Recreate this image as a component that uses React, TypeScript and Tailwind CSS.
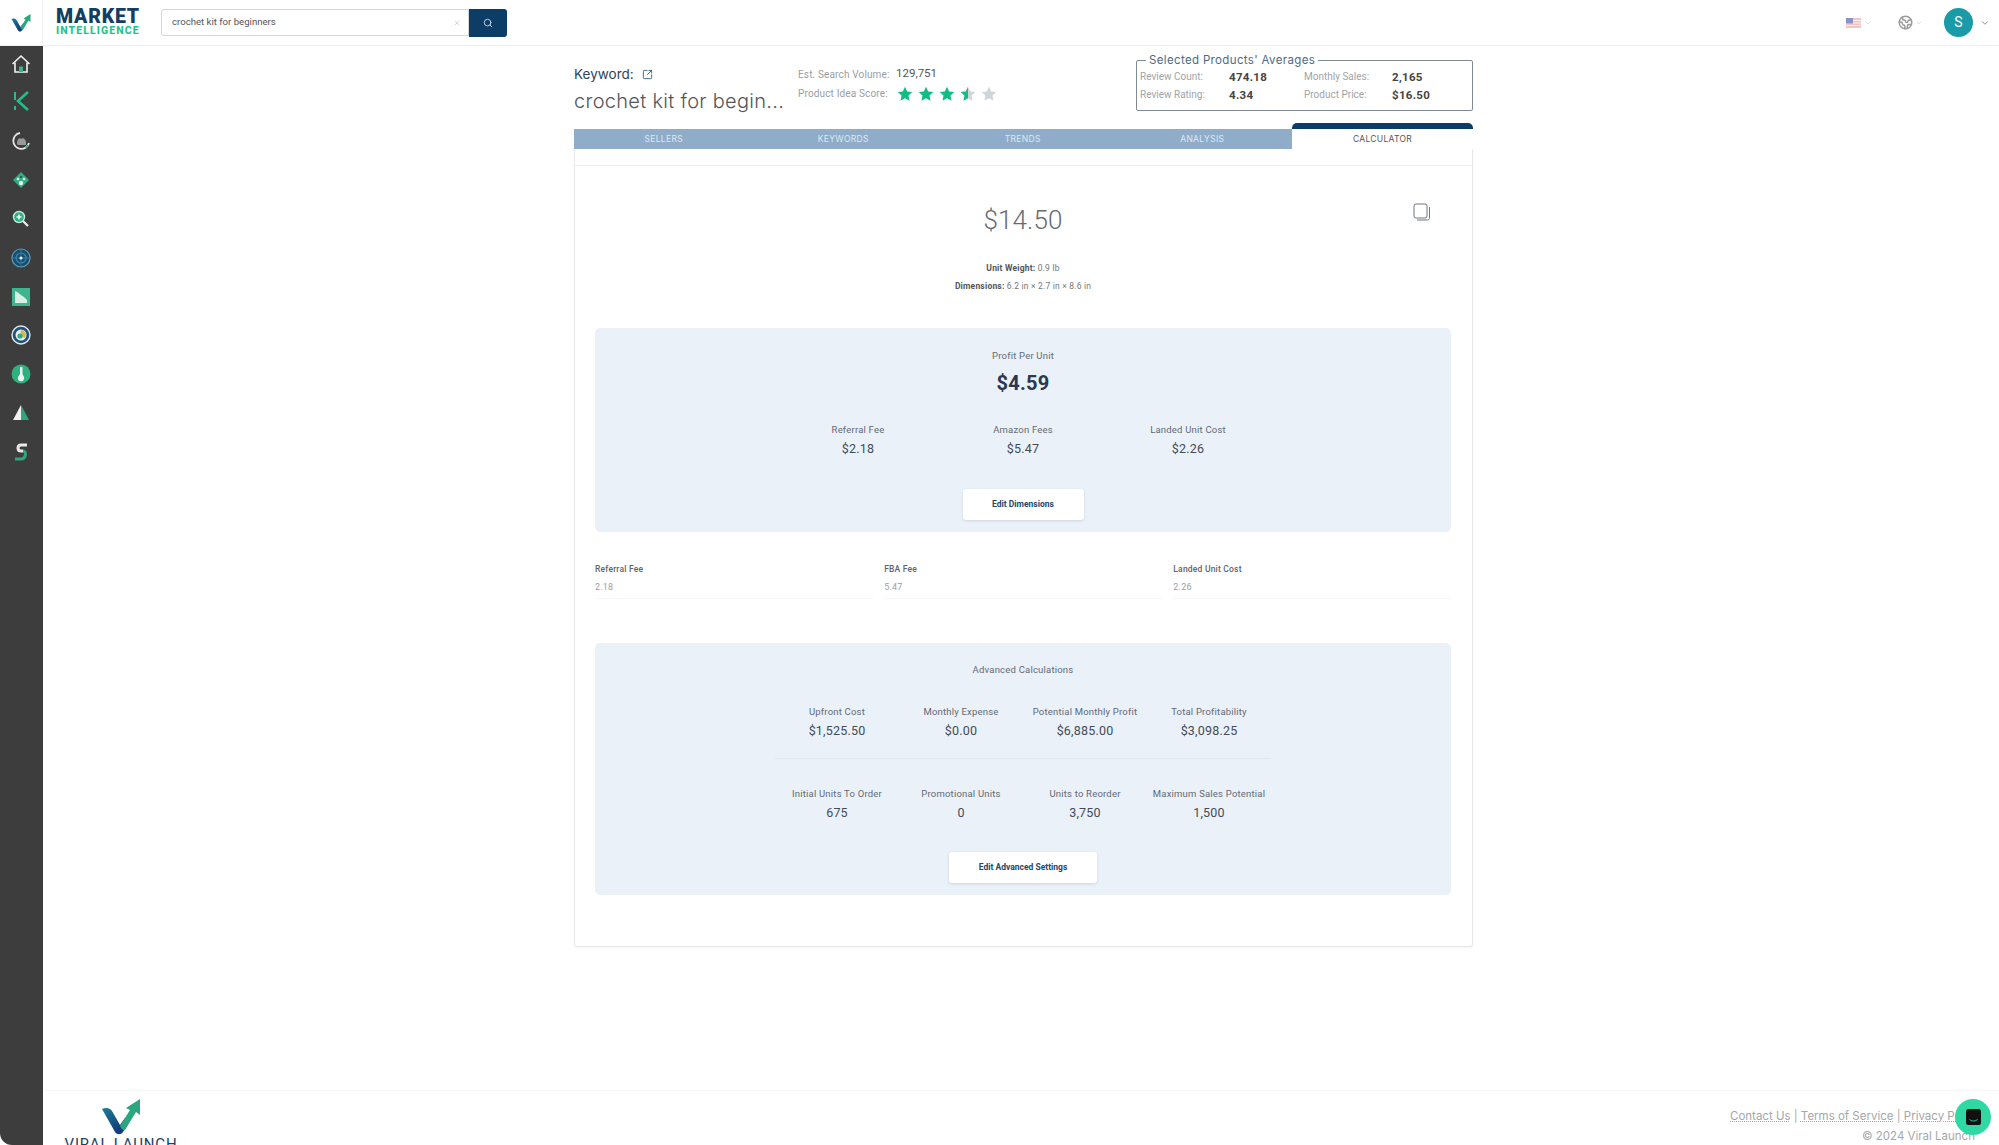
import { ChevronDown, Earth, Search, SquareArrowOutUpRight, X } from "lucide-react";

const sansLabel = "font-['Roboto',sans-serif]";
const wideFont = "font-['Inter','Open_Sans',sans-serif]";

const feeColumns = [
  { label: "Referral Fee", value: "$2.18" },
  { label: "Amazon Fees", value: "$5.47" },
  { label: "Landed Unit Cost", value: "$2.26" },
];

const feeFields = [
  { label: "Referral Fee", value: "2.18" },
  { label: "FBA Fee", value: "5.47" },
  { label: "Landed Unit Cost", value: "2.26" },
];

const advancedTop = [
  { label: "Upfront Cost", value: "$1,525.50" },
  { label: "Monthly Expense", value: "$0.00" },
  { label: "Potential Monthly Profit", value: "$6,885.00" },
  { label: "Total Profitability", value: "$3,098.25" },
];

const advancedBottom = [
  { label: "Initial Units To Order", value: "675" },
  { label: "Promotional Units", value: "0" },
  { label: "Units to Reorder", value: "3,750" },
  { label: "Maximum Sales Potential", value: "1,500" },
];

function VLogo({ size }: { size: number }) {
  return (
    <svg width={size} height={size} viewBox="0 0 40 40">
      <defs>
        <linearGradient id={`vl-${size}`} x1="0" y1="0" x2="1" y2="1">
          <stop offset="0" stopColor="#1f7f96" />
          <stop offset="0.7" stopColor="#123f7a" />
        </linearGradient>
      </defs>
      <path d="M1 12 C5 10 9 11 11 14 L19 28 L24 21 L29 24 L22 35 C20 38 16 38 14 35 Z" fill={`url(#vl-${size})`} />
      <path d="M19 29 L29 13 L25 11 L39 2 L39 18 L35 15 L24 33 C23 34 21 33 19 29 Z" fill="#2aa77f" />
    </svg>
  );
}

function Star({ fill }: { fill: "full" | "half" | "empty" }) {
  const gray = "#cfd5db";
  const green = "#12bd85";
  const d = "M8 .8l2.2 4.7 5.1.6-3.8 3.5 1 5.1L8 12.2l-4.5 2.5 1-5.1L.7 6.1l5.1-.6z";
  return (
    <svg width="16" height="16" viewBox="0 0 16 16">
      <path d={d} fill={fill === "full" ? green : gray} />
      {fill === "half" && <path d="M8 .8L5.8 5.5l-5.1.6 3.8 3.5-1 5.1L8 12.2z" fill={green} />}
    </svg>
  );
}

function SideIcon({ children }: { children: React.ReactNode }) {
  return <div className="flex h-[38.8px] w-full items-center justify-center">{children}</div>;
}

function Sidebar() {
  return (
    <aside className="flex w-[43px] shrink-0 flex-col items-center rounded-bl-xl bg-[#3d3d3d] pt-[2px] pr-[2px]">
      <div className="flex h-[32px] w-full items-center justify-center">
        <svg width="20" height="20" viewBox="0 0 20 20" fill="none" stroke="#f1f1f1" strokeWidth="1.6">
          <path d="M1.5 10 L10 2 L18.5 10" />
          <path d="M4 8.5 V18 H16 V8.5" />
          <rect x="8" y="12.5" width="4" height="5.5" fill="#2fb785" stroke="none" />
        </svg>
      </div>
      <div className="flex h-[42px] w-full items-center justify-center">
        <svg width="18" height="20" viewBox="0 0 18 20" fill="none" stroke="#21c08b" strokeWidth="2.6">
          <path d="M3 1 V9 M3 15 V19" strokeWidth="2" />
          <path d="M16 1 L6 10 L16 19" />
        </svg>
      </div>
      <SideIcon>
        <svg width="20" height="20" viewBox="0 0 20 20" fill="none">
          <path d="M9 2 A8 8 0 1 0 18 12" stroke="#e6e6e6" strokeWidth="1.8" />
          <path d="M6 13 C6 9 8 6 10 8 C12 6 15 9 15 11 L15 14 L7 14 Z" fill="#9a9a9a" />
          <path d="M17 14 L15 17" stroke="#2fb785" strokeWidth="1.8" />
        </svg>
      </SideIcon>
      <SideIcon>
        <svg width="18" height="18" viewBox="0 0 18 18">
          <path d="M9 1 L17 9 L9 17 L1 9 Z" fill="#2fae84" />
          <circle cx="9" cy="12" r="2.2" fill="#eeeeee" />
          <circle cx="6" cy="8" r="1.3" fill="#e3e3e3" />
          <circle cx="12" cy="8" r="1.3" fill="#e3e3e3" />
          <circle cx="9" cy="6" r="1" fill="#3d3d3d" />
        </svg>
      </SideIcon>
      <SideIcon>
        <svg width="19" height="19" viewBox="0 0 19 19" fill="none">
          <circle cx="8" cy="8" r="5.5" fill="#2fae84" stroke="#c9e7dc" strokeWidth="1.4" />
          <path d="M5.5 8 H10.5 M8 5.5 V10.5" stroke="#f3f3f3" strokeWidth="1.6" />
          <path d="M12 12 L17 17" stroke="#ececec" strokeWidth="2.2" />
        </svg>
      </SideIcon>
      <SideIcon>
        <svg width="20" height="20" viewBox="0 0 20 20" fill="none">
          <circle cx="10" cy="10" r="9" fill="#174d70" stroke="#5f9cb8" strokeWidth="1.2" />
          <circle cx="10" cy="10" r="5" stroke="#3f86a8" strokeWidth="1.2" />
          <path d="M10 1 V19 M1 10 H19" stroke="#3f86a8" strokeWidth="0.7" />
          <circle cx="10" cy="10" r="1.6" fill="#f0f0f0" />
        </svg>
      </SideIcon>
      <SideIcon>
        <svg width="18" height="18" viewBox="0 0 18 18">
          <rect width="18" height="18" fill="#3fb48e" />
          <path d="M3 15 V3 L6 4.5 L9 7 L12 9 L15 12 V15 Z" fill="#d8efe6" />
        </svg>
      </SideIcon>
      <SideIcon>
        <svg width="20" height="20" viewBox="0 0 20 20" fill="none">
          <circle cx="10" cy="10" r="9" fill="#21537a" stroke="#e2e8ee" strokeWidth="1.4" />
          <circle cx="10" cy="10" r="5.5" fill="#e7eef2" />
          <path d="M10 5 A5 5 0 0 1 14 13 L9 11 Z" fill="#d6b84c" />
          <circle cx="9" cy="11" r="2.6" fill="#2fae84" />
        </svg>
      </SideIcon>
      <SideIcon>
        <svg width="20" height="20" viewBox="0 0 20 20">
          <circle cx="10" cy="10" r="9.5" fill="#2fb07f" />
          <path d="M9 3 H11.5 V10 L13 13 A3.2 3.2 0 1 1 7 13 L9 10 Z" fill="#f2f2f2" />
        </svg>
      </SideIcon>
      <SideIcon>
        <svg width="18" height="16" viewBox="0 0 18 16">
          <path d="M9 0 L9 15 L1 15 Z" fill="#f2f2f2" />
          <path d="M9 0 L17 15 L9 15 Z" fill="#2fa77e" />
        </svg>
      </SideIcon>
      <SideIcon>
        <svg width="16" height="20" viewBox="0 0 16 20" fill="none" strokeWidth="3">
          <path d="M14 3 H8 C4 3 4 9 8 9 H10" stroke="#e9e9e9" />
          <path d="M10 9 C14 9 13 17 8 17 H2" stroke="#2fa77e" />
        </svg>
      </SideIcon>
    </aside>
  );
}

function Header() {
  return (
    <header className="flex h-[46px] shrink-0 items-stretch border-b border-[#eceef0] bg-white">
      <div className="flex w-[43px] shrink-0 items-center justify-center border-r border-[#eef0f2]">
        <VLogo size={20} />
      </div>
      <div className={`ml-[13px] flex w-[105px] flex-col justify-center ${sansLabel}`}>
        <span className="text-[19.5px] leading-[16px] font-black tracking-[0.8px] text-[#123e63]">MARKET</span>
        <span className="text-[10.5px] leading-[11px] font-extrabold tracking-[1.1px] text-[#23c28d]">INTELLIGENCE</span>
      </div>
      <div className="flex items-center">
        <div className="flex h-[27px] w-[308px] items-center justify-between rounded-l-[3px] border border-[#d4d7da] pr-[7px] pl-[10px]">
          <span className={`text-[9.6px] text-[#555] ${sansLabel}`}>crochet kit for beginners</span>
          <X size={8} color="#c4c4c4" />
        </div>
        <div className="flex h-[28px] w-[38px] items-center justify-center rounded-r-[3px] bg-[#0c3d66]">
          <Search size={10} color="#dbe6ee" />
        </div>
      </div>
      <div className="ml-auto flex items-center pr-[9px]">
        <svg width="15" height="10" viewBox="0 0 15 10">
          <rect width="15" height="10" fill="#f3c4c4" />
          <path d="M0 2.5 H15 M0 5 H15 M0 7.5 H15" stroke="#f7f0f0" strokeWidth="1" />
          <rect width="7" height="5.5" fill="#8c93c4" />
        </svg>
        <ChevronDown size={8} color="#cfcfcf" className="ml-[3px]" />
        <Earth size={15} color="#9a9a9a" strokeWidth={2.4} className="ml-[26px]" />
        <ChevronDown size={8} color="#cfcfcf" className="ml-[2px]" />
        <div className={`ml-[21px] flex h-[29px] w-[29px] items-center justify-center rounded-full bg-[#1a9ba8] text-[14px] text-white ${sansLabel}`}>
          S
        </div>
        <ChevronDown size={10} color="#777" className="ml-[7px]" />
      </div>
    </header>
  );
}

function SummaryRow() {
  return (
    <div className="flex h-[77px] items-start">
      <div className={`w-[224px] pt-[19px] ${wideFont}`}>
        <div className="flex items-center gap-[8px]">
          <span className="text-[13.5px] leading-[18px] text-[#2f4357]">Keyword:</span>
          <SquareArrowOutUpRight size={11} color="#2d5f86" />
        </div>
        <div className="mt-[5px] text-[20px] leading-[26px] font-light tracking-[0.3px] text-[#555]">crochet kit for begin...</div>
      </div>
      <div className={`w-[340px] pt-[18.5px] ${sansLabel}`}>
        <div className="flex h-[19px] items-center">
          <span className="w-[98px] text-[10px] tracking-[0.15px] text-[#9a9ea3]">Est. Search Volume:</span>
          <span className="text-[11.5px] text-[#555]">129,751</span>
        </div>
        <div className="flex h-[20px] items-center">
          <span className="w-[98px] text-[10px] tracking-[0.15px] text-[#9a9ea3]">Product Idea Score:</span>
          <div className="ml-[1px] flex gap-[5px]">
            <Star fill="full" />
            <Star fill="full" />
            <Star fill="full" />
            <Star fill="half" />
            <Star fill="empty" />
          </div>
        </div>
      </div>
      <fieldset className={`mt-[9px] ml-[-2px] h-[56px] w-[337px] rounded-[2px] border border-[#7f8a93] pr-[3px] pb-[2px] pl-[3px] ${sansLabel}`}>
        <legend className={`ml-[6px] px-[3px] text-[11.5px] leading-[11px] tracking-[0.35px] text-[#4b6a85] ${wideFont}`}>
          Selected Products&#39; Averages
        </legend>
        <div className="grid grid-cols-[89px_75px_88px_1fr] items-center pt-[2px] text-[10px] leading-[18px]">
          <span className="text-[#a0a4a8]">Review Count:</span>
          <span className="text-[11.5px] font-bold tracking-[0.3px] text-[#444]">474.18</span>
          <span className="text-[#a0a4a8]">Monthly Sales:</span>
          <span className="text-[11.5px] font-bold tracking-[0.3px] text-[#444]">2,165</span>
          <span className="text-[#a0a4a8]">Review Rating:</span>
          <span className="text-[11.5px] font-bold tracking-[0.3px] text-[#444]">4.34</span>
          <span className="text-[#a0a4a8]">Product Price:</span>
          <span className="text-[11.5px] font-bold tracking-[0.3px] text-[#444]">$16.50</span>
        </div>
      </fieldset>
    </div>
  );
}

function Tabs() {
  return (
    <div className={`flex items-end ${wideFont}`}>
      {["SELLERS", "KEYWORDS", "TRENDS", "ANALYSIS"].map((tab) => (
        <div key={tab} className="flex h-[20px] w-[179.5px] items-center justify-center bg-[#8fadc9] text-[8.5px] tracking-[0.3px] text-[#dbe8f3]">
          {tab}
        </div>
      ))}
      <div className="flex h-[26px] flex-1 flex-col rounded-t-[5px] border-t-[6px] border-[#0c3d66] bg-white">
        <div className="flex h-[20px] items-center justify-center text-[8.5px] tracking-[0.3px] text-[#555]">CALCULATOR</div>
      </div>
    </div>
  );
}

function Stat({ label, value }: { label: string; value: string }) {
  return (
    <div className="flex flex-col items-center">
      <span className="text-[9.5px] leading-[12px] tracking-[0.2px] whitespace-nowrap text-[#626a74]">{label}</span>
      <span className="mt-[5px] text-[12.5px] leading-[15px] tracking-[0.2px] text-[#444b55]">{value}</span>
    </div>
  );
}

function CalculatorCard() {
  return (
    <div className={`relative h-[798px] rounded-b-[3px] border-x border-b border-[#e6e8ea] pr-[21px] pl-[20px] shadow-[0_1px_2px_rgba(0,0,0,0.05)] ${sansLabel}`}>
      <div className="mr-[-21px] ml-[-20px] h-[17px] border-b border-[#eceef0]" />
      <svg className="absolute top-[54px] right-[41px]" width="18" height="18" viewBox="0 0 18 18" fill="none" stroke="#6f7780" strokeWidth="1">
        <rect x="1" y="1" width="13" height="14" rx="2" />
        <path d="M16.5 4 V15.5 A2 2 0 0 1 14.5 17 H4" />
      </svg>

      <div className="pt-[37px] text-center">
        <div className="text-[26px] leading-[34px] font-light tracking-[0.1px] text-[#666b70]">$14.50</div>
        <div className="mt-[22px] text-[8.5px] leading-[18px] tracking-[0.2px] text-[#777]">
          <div><b className="font-bold text-[#555]">Unit Weight:</b> 0.9 lb</div>
          <div><b className="font-bold text-[#555]">Dimensions:</b> 6.2 in × 2.7 in × 8.6 in</div>
        </div>
      </div>

      <section className="mt-[33px] h-[204px] rounded-[5px] bg-[#ebf1f9] pt-[22px] text-center">
        <div className="text-[9.5px] leading-[12px] tracking-[0.2px] text-[#626a74]">Profit Per Unit</div>
        <div className="mt-[7px] text-[20px] leading-[28px] font-bold tracking-[0.3px] text-[#2a3850]">$4.59</div>
        <div className="mt-[27px] grid grid-cols-[165px_165px_165px] justify-center">
          {feeColumns.map((c) => (
            <Stat key={c.label} label={c.label} value={c.value} />
          ))}
        </div>
        <button className="mx-auto mt-[33px] block h-[31px] w-[121px] rounded-[3px] bg-white text-[8.5px] font-bold text-[#24476b] shadow-[0_1px_3px_rgba(30,60,90,0.15)]">
          Edit Dimensions
        </button>
      </section>

      <div className="mt-[32px] grid grid-cols-3 gap-x-[11.5px]">
        {feeFields.map((f) => (
          <div key={f.label} className="h-[35px] border-b border-[#f5f6f7]">
            <div className="text-[8.5px] leading-[11px] font-medium tracking-[0.2px] text-[#5b6570]">{f.label}</div>
            <div className="mt-[6px] text-[9px] leading-[12px] tracking-[0.2px] text-[#9a9fa5]">{f.value}</div>
          </div>
        ))}
      </div>

      <section className="mt-[44px] h-[252px] rounded-[5px] bg-[#ebf1f9] pt-[21px] text-center">
        <div className="text-[9.5px] leading-[12px] tracking-[0.2px] text-[#626a74]">Advanced Calculations</div>
        <div className="mt-[30px] grid grid-cols-[124px_124px_124px_124px] justify-center">
          {advancedTop.map((c) => (
            <Stat key={c.label} label={c.label} value={c.value} />
          ))}
        </div>
        <div className="mx-auto mt-[20px] h-px w-[496px] bg-[#e1e7ef]" />
        <div className="mt-[29px] grid grid-cols-[124px_124px_124px_124px] justify-center">
          {advancedBottom.map((c) => (
            <Stat key={c.label} label={c.label} value={c.value} />
          ))}
        </div>
        <button className="mx-auto mt-[32px] block h-[31px] w-[148px] rounded-[3px] bg-white text-[8.5px] font-bold text-[#24476b] shadow-[0_1px_3px_rgba(30,60,90,0.15)]">
          Edit Advanced Settings
        </button>
      </section>
    </div>
  );
}

function Footer() {
  return (
    <footer className="mt-auto flex h-[55px] shrink-0 items-start justify-between border-t border-[#f5f6f7] pl-[22px]">
      <div className="flex w-[112px] flex-col items-center pt-[6px]">
        <VLogo size={40} />
        <span className={`text-[15px] leading-[14px] tracking-[0.8px] whitespace-nowrap text-[#1d3f63] ${sansLabel}`}>VIRAL LAUNCH</span>
      </div>
      <div className={`w-[269px] pt-[15px] text-right text-[11.5px] leading-[20px] text-[#a4a7aa] ${wideFont}`}>
        <div className="whitespace-nowrap text-left">
          <span className="underline decoration-dotted">Contact Us</span> | <span className="underline decoration-dotted">Terms of Service</span> | <span className="underline decoration-dotted">Privacy Policy</span>
        </div>
        <div className="pr-[24px] whitespace-nowrap">© 2024 Viral Launch</div>
      </div>
    </footer>
  );
}

export default function App() {
  return (
    <div className="relative flex h-[1145px] flex-col overflow-hidden bg-white">
      <Header />
      <div className="flex min-h-0 flex-1">
        <Sidebar />
        <main className="flex min-w-0 flex-1 flex-col">
          <div className="ml-[531px] w-[899px]">
            <SummaryRow />
            <Tabs />
            <CalculatorCard />
          </div>
          <Footer />
        </main>
      </div>

      {/* chat launcher */}
      <div className="absolute top-[1099px] left-[1955px] flex h-[36px] w-[36px] items-center justify-center rounded-full bg-[#2fd9a4]">
        <svg width="15" height="16" viewBox="0 0 15 16">
          <rect width="15" height="16" rx="2.5" fill="#111" />
          <path d="M3.5 10.5 C6 12.5 9 12.5 11.5 10.5" stroke="#2fd9a4" strokeWidth="1" fill="none" />
        </svg>
      </div>
    </div>
  );
}
